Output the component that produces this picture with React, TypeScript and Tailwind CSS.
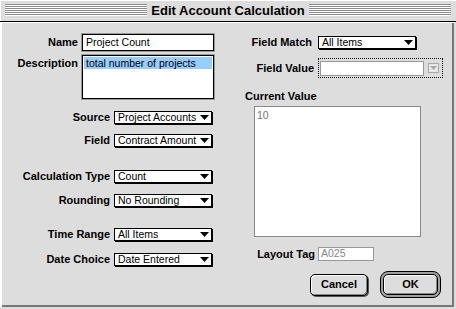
import type { ReactNode } from 'react';

const sans = "font-['Liberation_Sans',Arial,sans-serif]";

function Label({ w, children, className = '' }: { w: string; children: ReactNode; className?: string }) {
    return (
        <div className={`${w} shrink-0 text-right text-[11px] font-bold leading-[13px] text-black ${className}`}>
            {children}
        </div>
    );
}

function Popup({ value }: { value: string }) {
    return (
        <div className="ml-[4px] flex h-[13px] w-[98px] items-center border border-black bg-white pl-[3px] shadow-[1px_1px_0_#000]">
            <span className="flex-1 truncate text-[10.5px] leading-none">{value}</span>
            <svg width="9" height="5" viewBox="0 0 9 5" className="mr-[2px]">
                <path d="M0 0H9L4.5 5Z" fill="#000" />
            </svg>
        </div>
    );
}

function Stripes() {
    return (
        <div className="h-[12px] flex-1 bg-[repeating-linear-gradient(to_bottom,#8c8c8c_0px,#8c8c8c_1px,#ffffff_1px,#ffffff_2px)]" />
    );
}

export default function App() {
    return (
        <div className={`flex h-[309px] w-[456px] flex-col bg-[#dddddd] text-black ${sans}`}>
            {/* Title bar */}
            <div className="flex h-[22px] items-center border-b border-black px-[5px] pb-[1px] shadow-[inset_1px_1px_0_#fff]">
                <Stripes />
                <div className="px-[4px] text-[13px] font-bold leading-none">Edit Account Calculation</div>
                <Stripes />
            </div>

            {/* Body */}
            <div className="mb-[2px] mr-[2px] flex flex-1 shadow-[inset_2px_1px_0_#fff,inset_-2px_-2px_0_#777]">
                {/* Left column */}
                <div className="flex w-[228px] flex-col pt-[12px]">
                    <div className="flex h-[17px] items-center">
                        <Label w="w-[78px]">Name</Label>
                        <div className="ml-[4px] flex h-[17px] w-[132px] items-center border border-black bg-white pl-[3px] text-[10.5px] shadow-[0_0_0_1px_#999]">
                            Project Count
                        </div>
                    </div>
                    <div className="mt-[4px] flex">
                        <Label w="w-[78px]" className="pt-[2px]">Description</Label>
                        <div className="ml-[4px] h-[44px] w-[132px] border border-black bg-white p-[1px] shadow-[0_0_0_1px_#999]">
                            <div className="h-[12px] bg-[#99ccff] pl-[2px] text-[10.5px] leading-[12px]">
                                total number of projects
                            </div>
                        </div>
                    </div>

                    <div className="mt-[12px] flex items-center">
                        <Label w="w-[110px]">Source</Label>
                        <Popup value="Project Accounts" />
                    </div>
                    <div className="mt-[10px] flex items-center">
                        <Label w="w-[110px]">Field</Label>
                        <Popup value="Contract Amount" />
                    </div>

                    <div className="mt-[23px] flex items-center">
                        <Label w="w-[110px]">Calculation Type</Label>
                        <Popup value="Count" />
                    </div>
                    <div className="mt-[11px] flex items-center">
                        <Label w="w-[110px]">Rounding</Label>
                        <Popup value="No Rounding" />
                    </div>

                    <div className="mt-[21px] flex items-center">
                        <Label w="w-[110px]">Time Range</Label>
                        <Popup value="All Items" />
                    </div>
                    <div className="mt-[12px] flex items-center">
                        <Label w="w-[110px]">Date Choice</Label>
                        <Popup value="Date Entered" />
                    </div>
                </div>

                {/* Right column */}
                <div className="flex flex-1 flex-col pt-[14px]">
                    <div className="flex items-center">
                        <Label w="w-[84px]">Field Match</Label>
                        <div className="ml-[2px]">
                            <Popup value="All Items" />
                        </div>
                    </div>
                    <div className="mt-[9px] flex items-center">
                        <Label w="w-[86px]">Field Value</Label>
                        <div className="ml-[4px] flex h-[20px] w-[125px] items-center border border-dotted border-black pl-[1px]">
                            <div className="h-[15px] w-[104px] border border-[#999] bg-white" />
                            <div className="ml-[4px] flex h-[10px] w-[11px] items-center justify-center border border-[#aaa] bg-[#e8e8e8]">
                                <svg width="7" height="4" viewBox="0 0 7 4">
                                    <path d="M0 0H7L3.5 4Z" fill="#aaa" />
                                </svg>
                            </div>
                        </div>
                    </div>

                    <div className="mt-[12px] pl-[17px] text-[11px] font-bold leading-[13px]">Current Value</div>
                    <div className="ml-[26px] mt-[3px] h-[131px] w-[167px] border border-[#888] bg-white pl-[2px] pt-[2px] text-[10.5px] leading-[12px] text-[#777]">
                        10
                    </div>

                    <div className="mt-[10px] flex items-center">
                        <Label w="w-[87px]">Layout Tag</Label>
                        <div className="ml-[3px] flex h-[14px] w-[56px] items-center border border-[#999] bg-white pl-[2px] text-[10.5px] text-[#888]">
                            A025
                        </div>
                    </div>

                    <div className="mt-[10px] flex items-center">
                        <button className="ml-[82px] flex h-[22px] w-[58px] items-center justify-center rounded-[5px] border border-black bg-[#dddddd] text-[11px] font-bold leading-none shadow-[inset_1px_1px_0_#fff,inset_-1px_-1px_0_#888,1px_1px_0_#555]">
                            Cancel
                        </button>
                        <div className="ml-[12px] h-[27px] w-[61px] rounded-[8px] border border-black bg-[#a0a0a0] p-[2px]">
                            <button className="flex h-full w-full items-center justify-center rounded-[5px] border border-black bg-[#dddddd] text-[11px] font-bold leading-none shadow-[inset_1px_1px_0_#fff,inset_-1px_-1px_0_#888]">
                                OK
                            </button>
                        </div>
                    </div>
                </div>
            </div>
        </div>
    );
}
